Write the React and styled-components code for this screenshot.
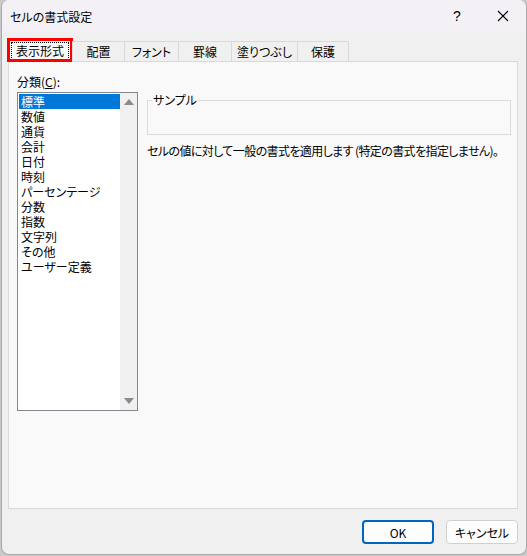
import React from "react";
import styled, { createGlobalStyle } from "styled-components";

const GlobalStyle = createGlobalStyle`
  html, body {
    margin: 0;
    padding: 0;
    background: #c9c9c9;
  }
  body {
    font-family: "Noto Sans CJK JP", "Noto Sans", sans-serif;
    font-size: 12px;
    font-feature-settings: "palt";
    color: #000;
  }
`;

const Window = styled.div`
  box-sizing: border-box;
  width: 526px;
  height: 555px;
  margin-left: 1px;
  display: flex;
  flex-direction: column;
  background: #f0f0f0;
  border: 1px solid #a9a9a9;
  border-top: none;
  border-radius: 8px;
  overflow: hidden;
`;

const TitleBar = styled.div`
  height: 31px;
  flex-shrink: 0;
  display: flex;
  align-items: center;
  background: #f3f1f6;
  padding-left: 8px;
`;

const Title = styled.div`
  flex: 1;
  font-size: 12px;
  padding-top: 1px;
`;

const TitleBtn = styled.div`
  width: 46px;
  height: 31px;
  display: flex;
  align-items: center;
  justify-content: center;
  font-family: "Liberation Sans", sans-serif;
  font-size: 14px;
`;

const Body = styled.div`
  flex: 1;
  display: flex;
  flex-direction: column;
  padding: 7px 8px 0 5px;
`;

const TabStrip = styled.div`
  display: flex;
  align-items: flex-end;
  height: 24px;
  position: relative;
  z-index: 1;
`;

const Tab = styled.div`
  box-sizing: border-box;
  height: ${p => (p.active ? 24 : 21)}px;
  width: ${p => p.w}px;
  display: flex;
  align-items: center;
  justify-content: center;
  background: ${p => (p.active ? "#f9f9f9" : "#f0f0f0")};
  border: 1px solid #d9d9d9;
  border-bottom: ${p => (p.active ? "none" : "1px solid #d9d9d9")};
  margin-left: ${p => (p.active ? 0 : -1)}px;
  ${p => p.active && "outline: 3px solid #ff0000; outline-offset: -3px;"}
`;

const FocusLabel = styled.span`
  box-sizing: border-box;
  border: 1px dotted #000;
  width: 58px;
  height: 18px;
  display: flex;
  align-items: center;
  justify-content: center;
`;

const Panel = styled.div`
  box-sizing: border-box;
  height: 448px;
  margin-left: 1px;
  margin-top: -1px;
  background: #f9f9f9;
  border: 1px solid #d9d9d9;
  display: grid;
  grid-template-columns: 121px minmax(0, 1fr);
  column-gap: 9px;
  padding: 12px 6px 0 8px;
`;

const LeftCol = styled.div`
  display: flex;
  flex-direction: column;
`;

const FieldLabel = styled.div`
  line-height: 16px;
  margin-bottom: 2px;
  u {
    text-decoration: underline;
  }
`;

const ListBox = styled.div`
  box-sizing: border-box;
  height: 319px;
  background: #fff;
  border: 1px solid #828790;
  display: flex;
`;

const Items = styled.div`
  flex: 1;
  padding: 1px 0 0 1px;
`;

const Item = styled.div`
  height: 15px;
  line-height: 15px;
  padding-left: 2px;
  background: ${p => (p.selected ? "#0078d7" : "transparent")};
  color: ${p => (p.selected ? "#fff" : "#000")};
`;

const ScrollBar = styled.div`
  width: 17px;
  background: #f0f0f0;
  display: flex;
  flex-direction: column;
  justify-content: space-between;
  align-items: center;
  padding: 6px 0;
`;

const Arrow = styled.div`
  width: 0;
  height: 0;
  border-left: 5px solid transparent;
  border-right: 5px solid transparent;
  ${p =>
    p.down
      ? "border-top: 6px solid #8a8a8a;"
      : "border-bottom: 6px solid #8a8a8a;"}
`;

const RightCol = styled.div`
  min-width: 0;
  padding-top: 19px;
`;

const Group = styled.fieldset`
  box-sizing: border-box;
  height: 42px;
  margin: 0;
  padding: 0 4px;
  border: 1px solid #dcdcdc;
  legend {
    padding: 0 1px;
    margin-left: 0;
    line-height: 14px;
  }
`;

const Description = styled.div`
  margin-top: 8px;
  line-height: 16px;
  white-space: nowrap;
  letter-spacing: -0.6px;
`;

const Footer = styled.div`
  flex: 1;
  display: flex;
  justify-content: flex-end;
  align-items: flex-start;
  gap: 12px;
  padding-top: 11px;
`;

const Button = styled.button`
  box-sizing: border-box;
  width: 72px;
  height: 24px;
  border-radius: 4px;
  background: #fdfdfd;
  border: ${p => (p.primary ? "2px solid #0067c0" : "1px solid #d0d0d0")};
  font-family: "Noto Sans CJK JP", "Noto Sans", sans-serif;
  font-feature-settings: "palt";
  font-size: 12px;
  color: #000;
  padding: 0;
`;

const tabs = [
  { label: "表示形式", w: 66 },
  { label: "配置", w: 53 },
  { label: "フォント", w: 55 },
  { label: "罫線", w: 54 },
  { label: "塗りつぶし", w: 67 },
  { label: "保護", w: 52 },
];

const categories = [
  "標準",
  "数値",
  "通貨",
  "会計",
  "日付",
  "時刻",
  "パーセンテージ",
  "分数",
  "指数",
  "文字列",
  "その他",
  "ユーザー定義",
];

export default function App() {
  return (
    <>
      <GlobalStyle />
      <Window>
        <TitleBar>
          <Title>セルの書式設定</Title>
          <TitleBtn>?</TitleBtn>
          <TitleBtn>
            <svg width="12" height="12" viewBox="0 0 12 12">
              <path d="M1 1L11 11M11 1L1 11" stroke="#000" strokeWidth="1.1" />
            </svg>
          </TitleBtn>
        </TitleBar>
        <Body>
          <TabStrip>
            {tabs.map((t, i) => (
              <Tab key={t.label} w={t.w} active={i === 0}>
                {i === 0 ? <FocusLabel>{t.label}</FocusLabel> : t.label}
              </Tab>
            ))}
          </TabStrip>
          <Panel>
            <LeftCol>
              <FieldLabel>
                分類(<u>C</u>):
              </FieldLabel>
              <ListBox>
                <Items>
                  {categories.map((c, i) => (
                    <Item key={c} selected={i === 0}>
                      {c}
                    </Item>
                  ))}
                </Items>
                <ScrollBar>
                  <Arrow />
                  <Arrow down />
                </ScrollBar>
              </ListBox>
            </LeftCol>
            <RightCol>
              <Group>
                <legend>サンプル</legend>
              </Group>
              <Description>
                セルの値に対して一般の書式を適用します (特定の書式を指定しません)。
              </Description>
            </RightCol>
          </Panel>
          <Footer>
            <Button primary>OK</Button>
            <Button>キャンセル</Button>
          </Footer>
        </Body>
      </Window>
    </>
  );
}
